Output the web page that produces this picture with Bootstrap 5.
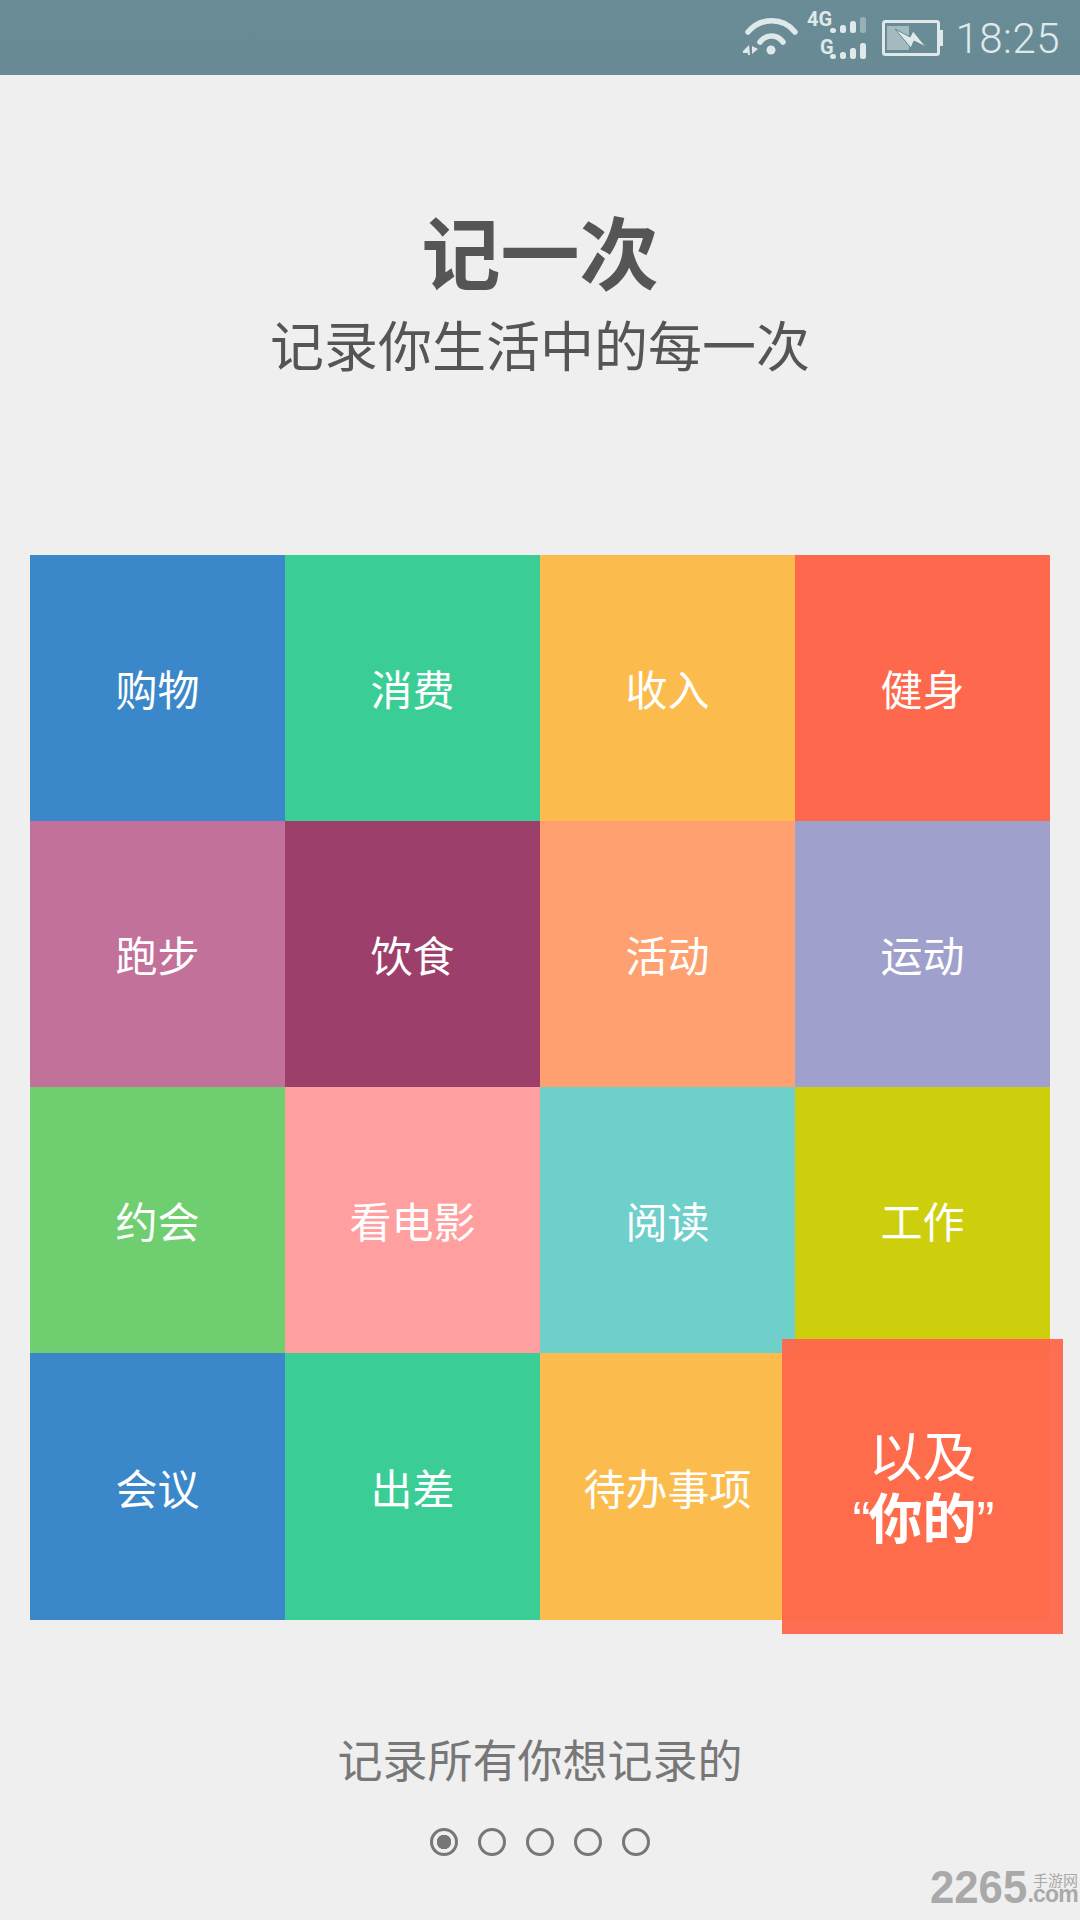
<!doctype html>
<html lang="zh">
<head>
<meta charset="utf-8">
<link rel="stylesheet" href="https://cdn.jsdelivr.net/npm/bootstrap@5.3.0/dist/css/bootstrap.min.css">
<style>
html,body{height:1920px;overflow:hidden}
body{background:#efefef;font-family:"Noto Sans CJK SC","Noto Sans",sans-serif;width:1080px}
.sbar{height:75px;background:linear-gradient(#6a8c96,#688a94);color:#dfe9ea;padding-right:20px}
.sbar svg{flex-shrink:0;display:block}
.swifi{margin-right:8px}.ssig{margin-right:14px}.sbat{margin-right:11px}
.sclock{font-family:Roboto,sans-serif;font-weight:300;font-size:42px;line-height:1;letter-spacing:.5px;padding-top:3px}
.sigtxt{font:700 20px Roboto,sans-serif;fill:#dfe9ea}
.title{height:480px;padding-top:125px;color:#555}
.title h1{font-size:79px;font-weight:700;line-height:100px;margin:0}
.title p{font-size:54px;line-height:72px;margin:8px 0 0}
.tiles{margin:0 30px;width:1020px;height:1065px;display:grid;grid-template-columns:repeat(4,255px);grid-template-rows:266px 266px 266px 267px;position:relative}
.tile{color:#fff;font-size:42px;line-height:1}
.c1{background:#3a88c9}.c2{background:#3ace96}.c3{background:#fbbc4d}.c4{background:#fe694d}
.c5{background:#c2719a}.c6{background:#9d3f6b}.c7{background:#ffa070}.c8{background:#9fa0cc}
.c9{background:#6fcf70}.c10{background:#ff9fa0}.c11{background:#6ecfcb}.c12{background:#cdcf0d}
.pop{position:absolute;left:752px;top:784px;width:281px;height:295px;background:rgba(254,104,76,.96);color:#fff;text-align:center}
.pop div{font-size:54px;line-height:64px}
.pop .bd{font-family:"Liberation Sans","Noto Sans CJK SC",sans-serif;font-weight:700;font-size:54px;margin-top:2px}
.qm{font-weight:400;letter-spacing:-2px}
.tagline{margin-top:111px;font-size:45px;line-height:56px;color:#777}
.dots{margin-top:41px;gap:20px}
.dotc{width:28px;height:28px;border:3px solid #777;border-radius:50%}
.dotc.on{background:radial-gradient(circle,#777 0 7px,transparent 7.5px)}
.wm{position:absolute;left:930px;bottom:10px;color:#a9a9a9;line-height:1}
.wmn{font:700 46px/46px "Liberation Sans",sans-serif;display:block;width:97px;flex-shrink:0;transform:scaleX(.95);transform-origin:left;white-space:nowrap}
.wmcol{margin-bottom:9px;width:51px}
.wmz{font-size:15px;line-height:14px;white-space:nowrap}
.wmc{font:700 23px/14px "Liberation Sans",sans-serif;letter-spacing:-.8px;white-space:nowrap}
</style>
</head>
<body class="position-relative">
<div class="sbar d-flex align-items-center justify-content-end">
  <svg class="swifi" width="56" height="45" viewBox="741 15 56 45">
    <g fill="none" stroke="#dfe9ea" stroke-width="5.5" stroke-linecap="round">
      <path d="M747 32C760 17 782 17 794 32"/><path d="M759 42C765 34 776 34 782 42"/>
    </g>
    <circle cx="770" cy="50" r="4.5" fill="#dfe9ea"/>
    <path d="M748 45l-6 6v2h5v2h2zM751 46v8l6-5z" fill="#dfe9ea"/>
  </svg>
  <svg class="ssig" width="62" height="60" viewBox="805 8 62 60">
    <text class="sigtxt" x="806" y="26">4G</text>
    <text class="sigtxt" x="819" y="54">G</text>
    <g fill="#dfe9ea">
      <rect x="829" y="28" width="6" height="5" rx="2.5"/><rect x="839" y="25" width="6" height="8" rx="2.5"/><rect x="849" y="21" width="6" height="12" rx="2.5"/><rect x="859" y="17" width="6" height="16" rx="2.5" opacity=".4"/>
      <rect x="829" y="54" width="6" height="5" rx="2.5"/><rect x="839" y="52" width="6" height="7" rx="2.5"/><rect x="849" y="48" width="6" height="11" rx="2.5"/><rect x="859" y="43" width="6" height="16" rx="2.5"/>
    </g>
  </svg>
  <svg class="sbat" width="62" height="38" viewBox="881 18 62 38">
    <rect x="882.5" y="20.5" width="55" height="33" rx="2" fill="none" stroke="#dfe9ea" stroke-width="3"/>
    <rect x="939" y="29" width="3" height="16" fill="#dfe9ea"/>
    <rect x="886" y="25" width="22" height="24" fill="#dfe9ea" opacity=".5"/>
    <path d="M894 28L909 36 912 30 925 46 913 40 910 47z" fill="#dfe9ea" stroke="#688a94"/>
  </svg>
  <span class="sclock">18:25</span>
</div>

<div class="title text-center">
  <h1>记一次</h1>
  <p>记录你生活中的每一次</p>
</div>

<div class="tiles">
  <div class="tile c1 d-flex align-items-center justify-content-center">购物</div>
  <div class="tile c2 d-flex align-items-center justify-content-center">消费</div>
  <div class="tile c3 d-flex align-items-center justify-content-center">收入</div>
  <div class="tile c4 d-flex align-items-center justify-content-center">健身</div>
  <div class="tile c5 d-flex align-items-center justify-content-center">跑步</div>
  <div class="tile c6 d-flex align-items-center justify-content-center">饮食</div>
  <div class="tile c7 d-flex align-items-center justify-content-center">活动</div>
  <div class="tile c8 d-flex align-items-center justify-content-center">运动</div>
  <div class="tile c9 d-flex align-items-center justify-content-center">约会</div>
  <div class="tile c10 d-flex align-items-center justify-content-center">看电影</div>
  <div class="tile c11 d-flex align-items-center justify-content-center">阅读</div>
  <div class="tile c12 d-flex align-items-center justify-content-center">工作</div>
  <div class="tile c1 d-flex align-items-center justify-content-center">会议</div>
  <div class="tile c2 d-flex align-items-center justify-content-center">出差</div>
  <div class="tile c3 d-flex align-items-center justify-content-center">待办事项</div>
  <div class="tile c3"></div>
  <div class="pop d-flex flex-column align-items-center justify-content-center">
    <div>以及</div>
    <div class="bd"><span class="qm">“</span>你的<span class="qm">”</span></div>
  </div>
</div>

<div class="tagline text-center">记录所有你想记录的</div>
<div class="dots d-flex justify-content-center">
  <div class="dotc on"></div><div class="dotc"></div><div class="dotc"></div><div class="dotc"></div><div class="dotc"></div>
</div>

<div class="wm d-flex align-items-end">
  <span class="wmn">2265</span>
  <div class="wmcol d-flex flex-column align-items-end">
    <span class="wmz">手游网</span>
    <span class="wmc">.com</span>
  </div>
</div>
<script src="https://cdn.jsdelivr.net/npm/bootstrap@5.3.0/dist/js/bootstrap.bundle.min.js"></script>
</body>
</html>
